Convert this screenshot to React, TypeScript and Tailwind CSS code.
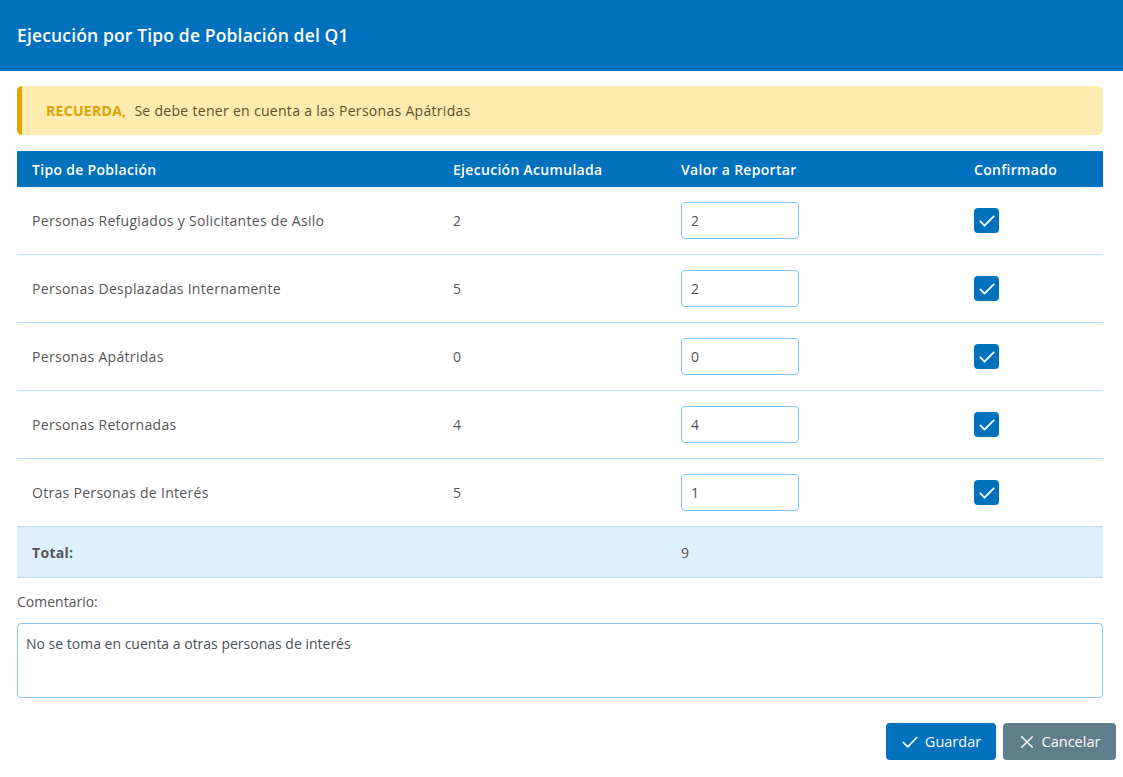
import React from "react";

const rows = [
  { name: "Personas Refugiados y Solicitantes de Asilo", acc: "2", val: "2" },
  { name: "Personas Desplazadas Internamente", acc: "5", val: "2" },
  { name: "Personas Apátridas", acc: "0", val: "0" },
  { name: "Personas Retornadas", acc: "4", val: "4" },
  { name: "Otras Personas de Interés", acc: "5", val: "1" },
];

function Check() {
  return (
    <div className="w-[25px] h-[25px] rounded-[4px] bg-[#0072bc] flex items-center justify-center">
      <svg width="20" height="20" viewBox="0 0 24 24" fill="none" stroke="white" strokeWidth="2.2" strokeLinecap="round" strokeLinejoin="round">
        <path d="M4 12.5l5 5L20 6.5" />
      </svg>
    </div>
  );
}

export default function App() {
  return (
    <div className="w-[1123px] h-[777px] bg-white overflow-hidden text-[14px] tracking-[0.3px] text-[#495057]" style={{ fontFamily: "'Open Sans', 'Noto Sans', sans-serif" }}>
      <div className="h-[71px] bg-[#0071bc] flex items-center px-[17px]">
        <h1 className="text-white text-[17.5px] tracking-[0.15px] font-semibold">Ejecución por Tipo de Población del Q1</h1>
      </div>
      <div className="pl-[17px] pr-[20px] pt-[15px]">
        <div className="h-[49px] rounded-[5px] bg-[#feebb0] border-l-[5px] border-[#dfa600] flex items-center pl-[24px]">
          <span className="font-bold text-[#dba300] mr-[8px]">RECUERDA,</span>
          <span className="text-[#5e5126]">Se debe tener en cuenta a las Personas Apátridas</span>
        </div>
        <div className="mt-[16px]">
          <div className="h-[36px] bg-[#0071bc] grid grid-cols-[421px_228px_293px_1fr] items-center pl-[15px] text-white font-semibold">
            <div>Tipo de Población</div>
            <div>Ejecución Acumulada</div>
            <div>Valor a Reportar</div>
            <div>Confirmado</div>
          </div>
          {rows.map((r) => (
            <div key={r.name} className="h-[68px] border-b border-[#b8e1fb] grid grid-cols-[421px_228px_293px_1fr] items-center pl-[15px] text-[#555]">
              <div>{r.name}</div>
              <div>{r.acc}</div>
              <div>
                <div className="w-[118px] h-[37px] border border-[#7cc6f4] rounded-[4px] flex items-center px-[9px] text-[#495057]">{r.val}</div>
              </div>
              <div><Check /></div>
            </div>
          ))}
          <div className="h-[51px] bg-[#dff1fd] border-b border-[#b8e1fb] grid grid-cols-[421px_228px_293px_1fr] items-center pl-[15px] text-[#555]">
            <div className="font-bold">Total:</div>
            <div></div>
            <div>9</div>
            <div></div>
          </div>
        </div>
        <div className="mt-[13px] text-[#555] tracking-normal">Comentario:</div>
        <div className="mt-[11px] h-[75px] border border-[#86c6f0] rounded-[4px] px-[8px] pt-[9px] text-[#495057] tracking-normal">
          No se toma en cuenta a otras personas de interés
        </div>
        <div className="mt-[25px] flex justify-end gap-[7px] mr-[-13px]">
          <button className="h-[37px] w-[110px] rounded-[4px] bg-[#0071bc] text-white text-[14.5px] tracking-normal flex items-center justify-center gap-[6px]">
            <svg width="18" height="18" viewBox="0 0 24 24" fill="none" stroke="white" strokeWidth="2" strokeLinecap="round" strokeLinejoin="round">
              <path d="M3 12.5l6 6L21 6" />
            </svg>
            Guardar
          </button>
          <button className="h-[37px] w-[113px] rounded-[4px] bg-[#607d8b] text-white text-[14.5px] tracking-normal flex items-center justify-center gap-[7px]">
            <svg width="16" height="16" viewBox="0 0 24 24" fill="none" stroke="white" strokeWidth="2.2" strokeLinecap="round">
              <path d="M4 4l16 16M20 4L4 20" />
            </svg>
            Cancelar
          </button>
        </div>
      </div>
    </div>
  );
}
